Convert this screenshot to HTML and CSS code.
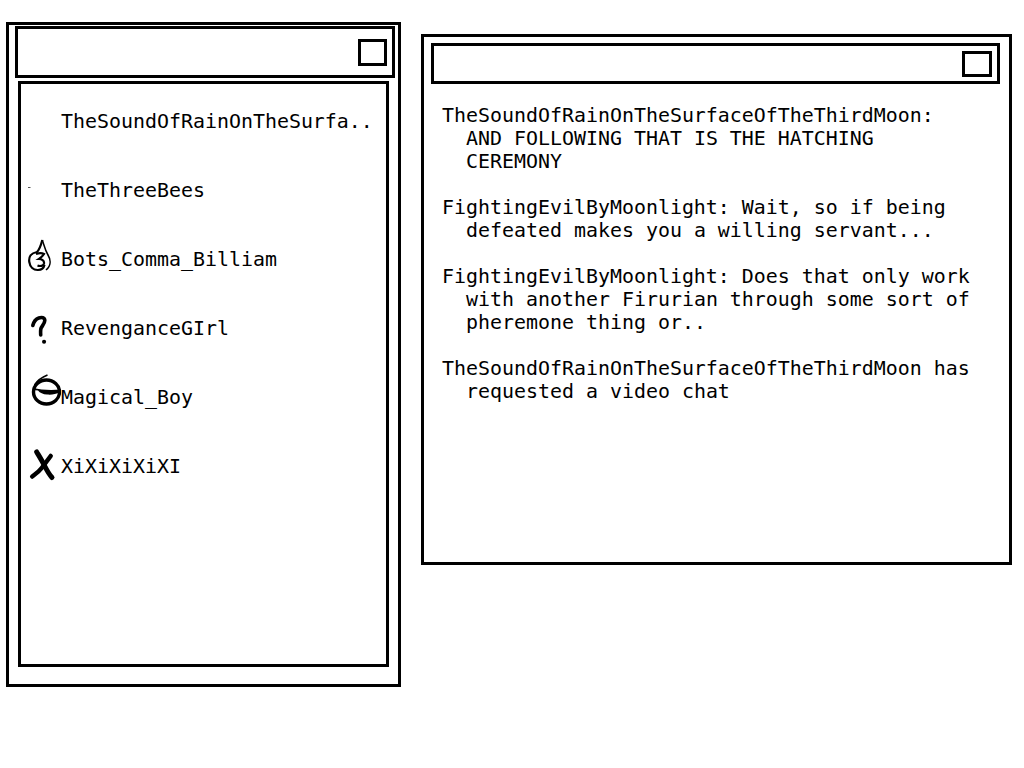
FILE: index.html
```html
<!DOCTYPE html>
<html lang="en">
<head>
  <meta charset="UTF-8">
  <meta name="viewport" content="width=device-width, initial-scale=1.0">
  <link rel="stylesheet" href="styles.css">
  <title>Chat</title>
</head>
<body>
  <div class="window buddy-window">
    <div class="title-bar">
      <div class="close-box"></div>
    </div>
    <div class="buddy-list">
      <div class="buddy"><span class="icon-slot"></span><span>TheSoundOfRainOnTheSurfa..</span></div>
      <div class="buddy">
        <svg class="icon-slot" viewBox="0 0 33 48"><path d="M0 20.500h2.500" stroke="#555" fill="none"/></svg>
        <span>TheThreeBees</span>
      </div>
      <div class="buddy">
        <svg class="icon-slot" viewBox="0 0 33 48" fill="none" stroke="#000">
          <path stroke-width="2.200" d="M14.300 4C13 9 12 13 9 16 3 17 .5 21 1.300 26c.7 5 4.200 8.200 8.700 8 4-.2 6-2.800 6.500-5.300"/>
          <path stroke-width="2.200" d="M8 18c3-1 6-1 8 0-1.500 2.500-3.500 4-5 5 2.500 0 5.500 1.500 5 4.500-.5 2.500-4 3-6.500 2"/>
          <path stroke-width="1.600" d="M14.300 4c1.700 5 2.700 10 5.700 15 3 5 3 11-2 15"/>
        </svg>
        <span>Bots_Comma_Billiam</span>
      </div>
      <div class="buddy">
        <svg class="icon-slot" viewBox="0 0 33 48" fill="none" stroke="#000">
          <path stroke-width="3.600" stroke-linecap="round" d="M4.800 20.500c1-4 3-6.500 6-7.500 3-1 6-.5 6 2.500 0 3-2.800 5.500-3.700 7.500-.6 1.500-.6 3.500-.4 7"/>
          <path stroke-width="4" stroke-linecap="round" d="M16 36.700h.1"/>
        </svg>
        <span>RevenganceGIrl</span>
      </div>
      <div class="buddy">
        <svg class="icon-slot" viewBox="0 0 33 48" fill="none" stroke="#000">
          <ellipse cx="18.500" cy="18" rx="13" ry="12" stroke-width="3.400"/>
          <path fill="#000" stroke="none" d="M5 14c8 2 18 2.500 28 1.500l-1 2.500c-4 2.500-9 3-13 2.600-4-.4-7-1.600-9-4.100l-5-.5z"/>
          <path stroke-width="1.500" d="M6.500 11c3-5 8-8 13-10"/>
        </svg>
        <span>Magical_Boy</span>
      </div>
      <div class="buddy">
        <svg class="icon-slot" viewBox="0 0 33 48" fill="none" stroke="#000" stroke-linecap="round">
          <path stroke-width="5" d="M8.700 9c3 5 5.500 9 8 14 2.500 5 5 9 7.300 11.500"/>
          <path stroke-width="4.500" d="M22.700 13c-3 4-6 8-9 12-3 4-6 6-9.500 8.500"/>
        </svg>
        <span>XiXiXiXiXI</span>
      </div>
    </div>
  </div>

  <div class="window chat-window">
    <div class="title-bar">
      <div class="close-box"></div>
    </div>
    <div class="chat-log">
      <p>TheSoundOfRainOnTheSurfaceOfTheThirdMoon: AND FOLLOWING THAT IS THE HATCHING CEREMONY</p>
      <p>FightingEvilByMoonlight: Wait, so if being defeated makes you a willing servant...</p>
      <p>FightingEvilByMoonlight: Does that only work with another Firurian through some sort of pheremone thing or..</p>
      <p>TheSoundOfRainOnTheSurfaceOfTheThirdMoon has requested a video chat</p>
    </div>
  </div>
</body>
</html>
```

FILE: styles.css
```css
body {
  font-family: "DejaVu Sans Mono", "Liberation Mono", monospace;
  font-size: 19.93px;
  line-height: 23px;
  color: #000;
  background-color: #fff;
  margin: 0;
  display: flex;
  align-items: flex-start;
}

.window {
  box-sizing: border-box;
  border: 3px solid #000;
}

.buddy-window {
  width: 395px;
  height: 665px;
  margin: 22px 0 0 6px;
  padding: 1px 0 0 6px;
}

.chat-window {
  width: 591px;
  height: 531px;
  margin: 34px 0 0 20px;
  padding: 6px 0 0 7px;
}

.title-bar {
  box-sizing: border-box;
  display: flex;
  justify-content: flex-end;
  align-items: center;
  border: 3px solid #000;
}

.buddy-window .title-bar {
  width: 380px;
  height: 52px;
  padding-right: 5px;
}

.chat-window .title-bar {
  width: 569px;
  height: 41px;
  padding-right: 5px;
}

.close-box {
  box-sizing: border-box;
  border: 3px solid #000;
}

.buddy-window .close-box {
  width: 29px;
  height: 27px;
}

.chat-window .close-box {
  width: 30px;
  height: 26px;
}

.buddy-list {
  box-sizing: border-box;
  width: 371px;
  height: 586px;
  margin: 3px 0 0 3px;
  padding-top: 3px;
  border: 3px solid #000;
}

.buddy {
  display: flex;
  align-items: center;
  height: 69px;
  white-space: pre;
}

.icon-slot {
  flex: none;
  width: 33px;
  height: 48px;
  margin-left: 7px;
}

.chat-log {
  padding: 20px 0 0 11px;
  width: 534px;
}

.chat-log p {
  margin: 0 0 23px;
  padding-left: 24px;
  text-indent: -24px;
}
```
